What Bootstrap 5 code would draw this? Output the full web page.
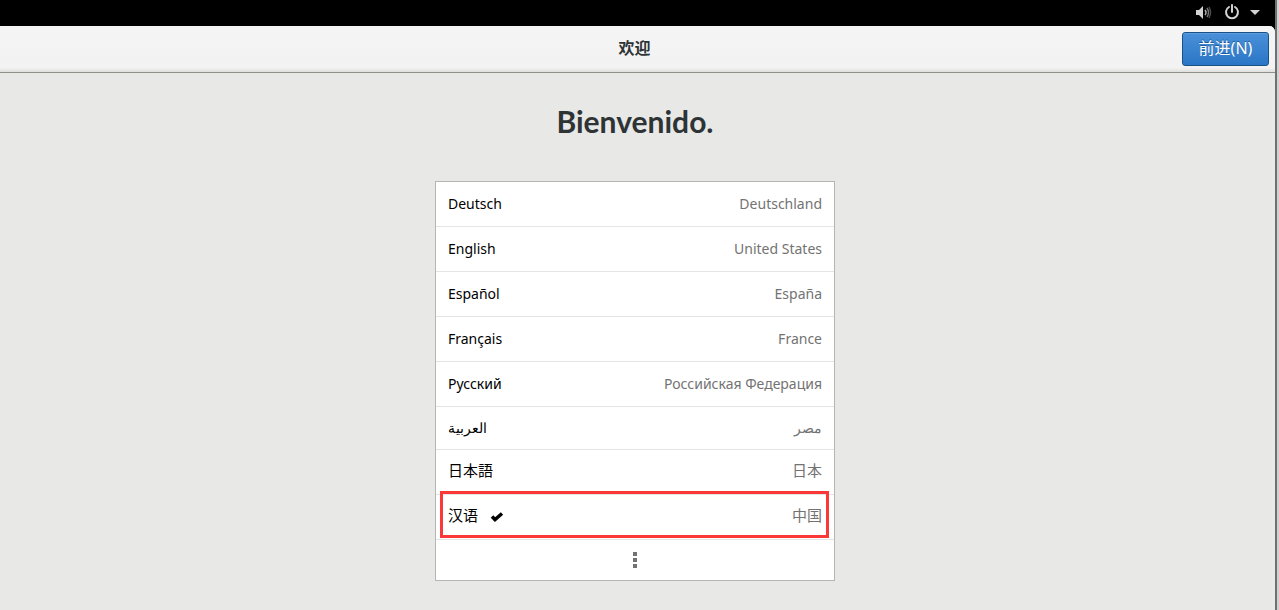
<!DOCTYPE html>
<html lang="zh-CN">
<head>
<meta charset="utf-8">
<meta name="viewport" content="width=device-width, initial-scale=1">
<title>欢迎</title>
<link href="https://cdn.jsdelivr.net/npm/bootstrap@5.3.0/dist/css/bootstrap.min.css" rel="stylesheet">
<style>
  body { font-family: "Noto Sans", "Noto Sans CJK SC", sans-serif; font-size: 14px; line-height: 20px; color: #2e3436; background: #000; }
  .screen { border-right: 2px solid #6d7173; box-shadow: 2px 0 0 #d0d2d2; margin-right: 2px; }
  .system-bar { height: 26px; padding: 0 15px 2px 0; background: #000; }
  .window { background: #e8e8e6; border-radius: 0 6px 0 0; }
  .title-bar { height: 47px; background: linear-gradient(#f5f5f5, #f2f2f2 42px, #dededc); border-bottom: 1px solid #8f8f8a; border-radius: 0 6px 0 0; display: grid; grid-template-columns: 1fr auto 1fr; padding: 0 6px 0 0; }
  .title-bar h1 { font-size: 16px; line-height: 20px; font-weight: 700; padding-bottom: 2px; }
  .btn-next { width: 87px; height: 34px; padding: 0 0 2px; font-size: 16px; line-height: 20px; color: #fff; border: 1px solid #1c5187; border-radius: 3px; background: linear-gradient(#4a90d9, #2a76c6); box-shadow: inset 0 1px #5b9de0; text-shadow: 0 -1px #1f5b99; }
  .btn-next:hover { color: #fff; background: #4a90d9; }
  .content { padding: 28px 5px 29px 0; }
  .greeting { font-family: Lato, "Noto Sans", sans-serif; font-size: 30px; line-height: 40px; font-weight: 700; margin-bottom: 40px; }
  .languages { width: 400px; max-width: 100%; border: 1px solid #b6b6b0; background: #fff; }
  .languages li + li { border-top: 1px solid #e4e4e4; }
  .language { height: 44px; padding: 0 12px; border: 0; background: none; color: #000; }
  .language.arabic { height: 42px; }
  .language.asian { font-size: 15px; padding-bottom: 4px; }
  .language .region { color: #737373; }
  .language.more { height: 40px; }
  .highlight { inset: -4px 5px 1px 4px; border: 3px solid #fb3838; pointer-events: none; }
</style>
</head>
<body>
<div class="screen min-vh-100 d-flex flex-column">
  <nav class="system-bar d-flex align-items-center justify-content-end" aria-label="System">
    <button class="btn p-0 border-0 d-flex align-items-center" aria-label="System menu">
      <svg width="16" height="16" viewBox="0 0 16 16" class="me-2" aria-hidden="true">
        <path d="M0 6h3l4-4v13l-4-4H0z" fill="#d3d3d3"/>
        <path d="M9 6q2 2.500 0 5" fill="none" stroke="#b0b0b0" stroke-width="1.500"/>
        <path d="M11 4q3 4.500 0 9" fill="none" stroke="#777" stroke-width="1.500"/>
        <path d="M13 3q3 5.500 0 11" fill="none" stroke="#4c4c4c" stroke-width="1.500"/>
      </svg>
      <svg width="26" height="16" viewBox="-5 0 26 16" aria-hidden="true">
        <path d="M4 3a6 6 0 1 0 6 0M7 1v7" fill="none" stroke="#d3d3d3" stroke-width="2" stroke-linecap="round"/>
      </svg>
      <svg width="10" height="6" viewBox="0 0 10 6" class="ms-1" aria-hidden="true"><path d="M0 1h10L5 6z" fill="#d3d3d3"/></svg>
    </button>
  </nav>
  <div class="window flex-grow-1">
    <header class="title-bar align-items-center">
      <span></span>
      <h1 class="m-0">欢迎</h1>
      <button class="btn btn-next ms-auto">前进(N)</button>
    </header>
    <main class="content d-flex flex-column align-items-center">
      <h2 class="greeting">Bienvenido.</h2>
      <ul class="languages list-unstyled m-0">
        <li><button class="language w-100 d-flex align-items-center justify-content-between"><span>Deutsch</span><span class="region">Deutschland</span></button></li>
        <li><button class="language w-100 d-flex align-items-center justify-content-between"><span>English</span><span class="region">United States</span></button></li>
        <li><button class="language w-100 d-flex align-items-center justify-content-between"><span>Español</span><span class="region">España</span></button></li>
        <li><button class="language w-100 d-flex align-items-center justify-content-between"><span>Français</span><span class="region">France</span></button></li>
        <li><button class="language w-100 d-flex align-items-center justify-content-between"><span>Русский</span><span class="region">Российская Федерация</span></button></li>
        <li><button class="language arabic w-100 d-flex align-items-center justify-content-between"><span lang="ar">العربية</span><span class="region" lang="ar">مصر</span></button></li>
        <li><button class="language asian w-100 d-flex align-items-center justify-content-between"><span lang="ja">日本語</span><span class="region" lang="ja">日本</span></button></li>
        <li class="position-relative"><button class="language asian w-100 d-flex align-items-center" aria-pressed="true"><span>汉语</span>
          <svg class="ms-2" width="18" height="16" viewBox="0 0 18 16" aria-hidden="true"><path d="M6 9.500l3 3 7-6" fill="none" stroke="#000" stroke-width="3.500"/></svg>
          <span class="region ms-auto">中国</span></button><span class="highlight position-absolute"></span></li>
        <li><button class="language more w-100 d-flex align-items-center justify-content-center" aria-label="More languages"><svg width="4" height="16" viewBox="0 0 4 16" aria-hidden="true"><path d="M0 0h4v4H0zM0 6h4v4H0zM0 12h4v4H0z" fill="#737373"/></svg></button></li>
      </ul>
    </main>
  </div>
</div>
<script src="https://cdn.jsdelivr.net/npm/bootstrap@5.3.0/dist/js/bootstrap.bundle.min.js"></script>
</body>
</html>
